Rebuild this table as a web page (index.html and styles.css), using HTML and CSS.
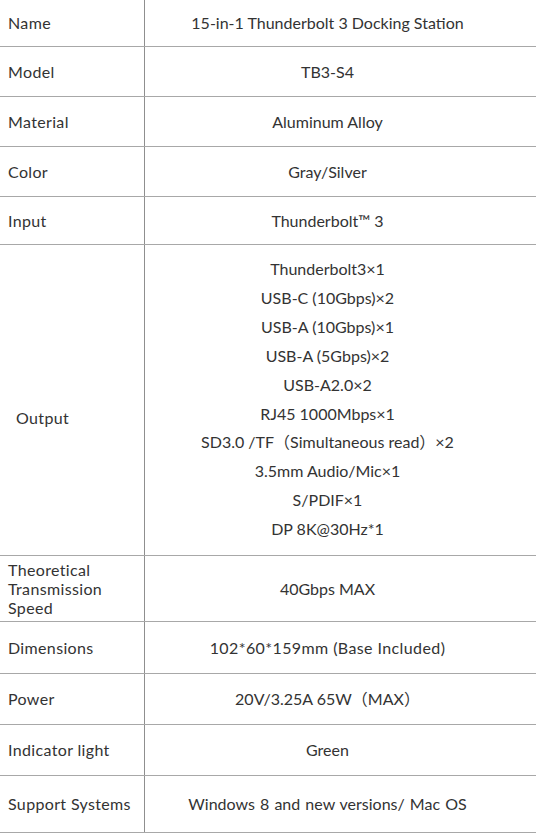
FILE: index.html
```html
<!DOCTYPE html>
<html>
<head>
<meta charset="utf-8">
<link rel="stylesheet" href="styles.css">
</head>
<body>
<table class="spec">
  <tr class="r46"><td class="k">Name</td><td class="v">15-in-1 Thunderbolt 3 Docking Station</td></tr>
  <tr class="r50"><td class="k">Model</td><td class="v">TB3-S4</td></tr>
  <tr class="r50"><td class="k">Material</td><td class="v">Aluminum Alloy</td></tr>
  <tr class="r50"><td class="k">Color</td><td class="v">Gray/Silver</td></tr>
  <tr class="r48"><td class="k">Input</td><td class="v">Thunderbolt™ 3</td></tr>
  <tr class="r311"><td class="k k-out">Output</td><td class="v v-list">
    <div>Thunderbolt3×1</div>
    <div>USB-C (10Gbps)×2</div>
    <div>USB-A (10Gbps)×1</div>
    <div>USB-A (5Gbps)×2</div>
    <div>USB-A2.0×2</div>
    <div>RJ45 1000Mbps×1</div>
    <div>SD3.0 /TF（Simultaneous read）×2</div>
    <div>3.5mm Audio/Mic×1</div>
    <div>S/PDIF×1</div>
    <div>DP 8K@30Hz*1</div>
  </td></tr>
  <tr class="r66"><td class="k">Theoretical Transmission Speed</td><td class="v">40Gbps MAX</td></tr>
  <tr class="r52"><td class="k">Dimensions</td><td class="v wide">102*60*159mm (Base Included)</td></tr>
  <tr class="r51"><td class="k">Power</td><td class="v">20V/3.25A 65W（MAX）</td></tr>
  <tr class="r51"><td class="k">Indicator light</td><td class="v">Green</td></tr>
  <tr class="r57"><td class="k">Support Systems</td><td class="v words">Windows 8 and new versions/ Mac OS</td></tr>
</table>
</body>
</html>
```

FILE: styles.css
```css
html, body {
  margin: 0;
  padding: 0;
  background: #ffffff;
}
body {
  font-family: Lato, "Noto Sans CJK SC", sans-serif;
  font-size: 16px;
  color: #333333;
}
.spec {
  width: 536px;
  border-collapse: collapse;
  table-layout: fixed;
}
.spec td {
  border-bottom: 1px solid #a8a8a8;
  padding: 0;
  vertical-align: middle;
  line-height: 19px;
}
.k {
  width: 136px;
  padding-left: 8px !important;
  border-right: 1px solid #8f8f8f;
  text-align: left;
  letter-spacing: 0.35px;
}
.k-out {
  padding-left: 16px !important;
  padding-top: 36px !important;
}
.v {
  text-align: center;
  padding-right: 26px !important;
}
.wide {
  letter-spacing: 0.4px;
}
.words {
  word-spacing: 1px;
}
.v-list div {
  line-height: 28.9px;
}
.r46 { height: 46px; }
.r48 { height: 48px; }
.r50 { height: 50px; }
.r51 { height: 51px; }
.r52 { height: 52px; }
.r57 { height: 57px; }
.r66 { height: 66px; }
.r311 { height: 311px; }
```
